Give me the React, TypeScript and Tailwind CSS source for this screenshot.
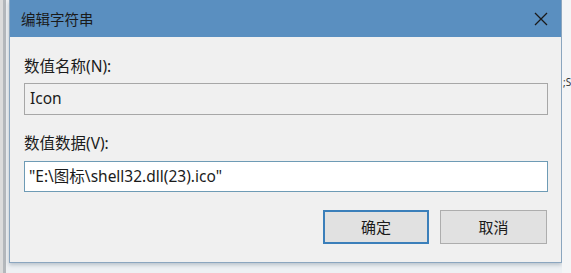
export default function App() {
  const font = { fontFamily: '"Noto Sans", "Noto Sans CJK SC", sans-serif' }
  return (
    <div className="flex h-[273px] w-[571px] overflow-hidden bg-[#eef1f4] text-[15.5px] text-[#1b1b1b]" style={font}>
      {/* window behind, left side */}
      <div className="flex h-full w-[9px] shrink-0">
        <div className="w-[3px] bg-[#dcdcdc]" />
        <div className="w-[3px] bg-[#b4b8bc]" />
        <div className="w-[3px] bg-[#eef0f2]" />
      </div>

      {/* dialog */}
      <div className="flex h-[263px] w-[553px] shrink-0 flex-col border border-t-0 border-[#8ba6bf] bg-[#f0f0f0] shadow-[0_2px_4px_rgba(90,110,130,0.35)]">
        <div className="flex h-[37px] shrink-0 items-center justify-between bg-[#5a8fc0] pl-[11px] pr-[13px]">
          <span className="text-[14.5px] leading-5 text-[#1a1a1a]">编辑字符串</span>
          <svg width="14" height="14" viewBox="0 0 14 14">
            <path d="M1 1L13 13M13 1L1 13" stroke="#1a1a1a" strokeWidth="1.3" />
          </svg>
        </div>

        <div className="flex flex-col pl-[14px] pr-[13px] pt-[19px]">
          <label className="leading-5">数值名称(N):</label>
          <div className="mt-[7px] flex h-[32px] items-center border border-[#a7a7a7] bg-[#f0f0f0] pl-[5px]">
            Icon
          </div>

          <label className="mt-[18px] leading-5">数值数据(V):</label>
          <div className="mt-[8px] flex h-[31px] items-center border border-[#6e9bb5] bg-white pl-[4px]">
            "E:\图标\shell32.dll(23).ico"
          </div>

          <div className="mt-[18px] flex justify-end gap-[11px] pr-[1px]">
            <button className="h-[34px] w-[106px] border-2 border-[#3b7fba] bg-[#e1e1e1] text-[15px]">
              确定
            </button>
            <button className="h-[34px] w-[107px] border border-[#adadad] bg-[#e1e1e1] text-[15px]">
              取消
            </button>
          </div>
        </div>
      </div>

      {/* window behind, right side */}
      <div className="relative flex-1 bg-[#f4f5f6]">
        <span className="absolute left-[1px] top-[76px] text-[10px] leading-3 text-[#333]">;S</span>
      </div>
    </div>
  )
}
